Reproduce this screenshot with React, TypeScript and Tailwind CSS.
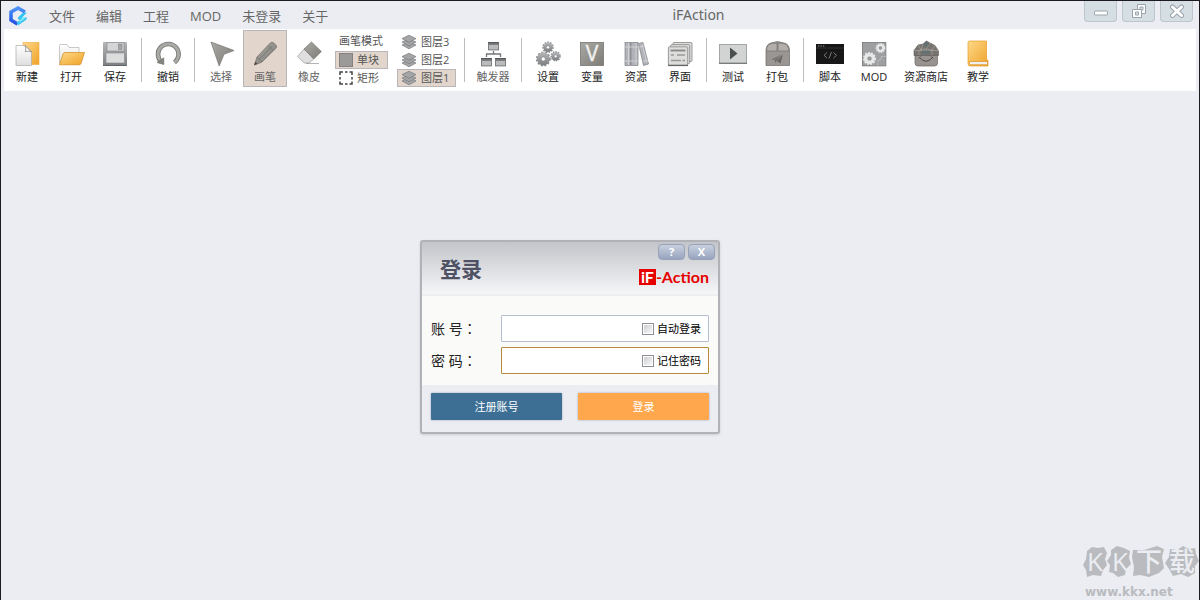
import type { ReactNode } from 'react';

const MENUS = ['文件', '编辑', '工程', 'MOD', '未登录', '关于'] as const;

function Icon({ children }: { children: ReactNode }) {
  return (
    <svg viewBox="0 0 28 28" className="h-7 w-7 shrink-0" aria-hidden="true">
      {children}
    </svg>
  );
}

// gradients shared by all toolbar icons
function Gradients() {
  return (
    <svg className="absolute h-0 w-0" aria-hidden="true">
      <defs>
        <linearGradient id="gold" x1="0" y1="0" x2="1" y2="1">
          <stop offset="0" stopColor="#fdd98a" />
          <stop offset="1" stopColor="#f0a227" />
        </linearGradient>
        <linearGradient id="paper" x1="0" y1="0" x2="0" y2="1">
          <stop offset="0" stopColor="#ffffff" />
          <stop offset="1" stopColor="#dedede" />
        </linearGradient>
        <linearGradient id="warm" x1="0" y1="0" x2="1" y2="1">
          <stop offset="0" stopColor="#aaa8a3" />
          <stop offset="1" stopColor="#7e7c76" />
        </linearGradient>
        <linearGradient id="steel" x1="0" y1="0" x2="0" y2="1">
          <stop offset="0" stopColor="#b4b6b8" />
          <stop offset="1" stopColor="#7c7e81" />
        </linearGradient>
        <linearGradient id="blue" x1="0" y1="0" x2="0" y2="1">
          <stop offset="0" stopColor="#4d94f8" />
          <stop offset="1" stopColor="#2450e0" />
        </linearGradient>
      </defs>
    </svg>
  );
}

function Gear({ x, y, r, fill = 'url(#steel)', hole = '#fff' }: { x: number; y: number; r: number; fill?: string; hole?: string }) {
  return (
    <g>
      <circle cx={x} cy={y} r={r - 0.9} fill="none" stroke={fill === 'url(#steel)' ? '#8b8d8f' : fill} strokeWidth="1.8" strokeDasharray={`${r * 0.27} ${r * 0.2}`} />
      <circle cx={x} cy={y} r={r - 1} fill={fill} />
      <circle cx={x} cy={y} r={r * 0.28} fill={hole} stroke="#77797b" strokeWidth=".5" />
    </g>
  );
}

const NewIcon = (
  <Icon>
    <path d="M10 2.5H26V24.5H10Z" fill="url(#gold)" stroke="#e9a83d" strokeWidth=".6" />
    <path d="M3 5.5H12L18.5 12V25.5H3Z" fill="url(#paper)" stroke="#aaa" strokeWidth=".7" />
    <path d="M12 5.5C13 8 13 10 12.2 11.6C14.5 11 17 11 18.5 12Z" fill="#fff" stroke="#777" strokeWidth=".7" />
  </Icon>
);
const OpenIcon = (
  <Icon>
    <path d="M2.5 23V5.5Q2.5 4.5 3.5 4.5H10L12 7.5H22V24Z" fill="url(#paper)" stroke="#b2b2b2" strokeWidth=".7" />
    <path d="M6 14Q6.4 12.5 8 12.5H27.5L24 23.5Q23.6 24.8 22 24.8H2.5Z" fill="url(#gold)" stroke="#d38a1d" strokeWidth=".7" />
  </Icon>
);
const SaveIcon = (
  <Icon>
    <rect x="2" y="2" width="24" height="24" rx="1" fill="url(#steel)" />
    <rect x="6" y="2.5" width="17" height="8.5" fill="#d5d6d7" stroke="#85878a" strokeWidth=".6" />
    <rect x="17.5" y="4" width="3.5" height="5.5" fill="#a4a6a8" stroke="#77797b" strokeWidth=".5" />
    <rect x="5" y="13" width="18.5" height="10" fill="#dcdddd" stroke="#85878a" strokeWidth=".6" />
    <path d="M2 25.5H26" stroke="#626568" />
  </Icon>
);
const UndoIcon = (
  <Icon>
    <path d="M7.5 22A10.3 10.3 0 1 1 20.5 22.5" fill="none" stroke="#777873" strokeWidth="4.6" />
    <path d="M7.5 22A10.3 10.3 0 1 1 20.5 22.5" fill="none" stroke="#a9aaa6" strokeWidth="2.8" />
    <path d="M3 22.5L9.8 17.8V24.5Z" fill="#858681" stroke="#686964" strokeWidth=".6" />
  </Icon>
);
const SelectIcon = (
  <Icon>
    <path d="M4 2L27 10.5L17 14.3L12.2 26Z" fill="url(#warm)" stroke="#77756f" strokeWidth=".7" />
  </Icon>
);
const PencilIcon = (
  <Icon>
    <path d="M3.5 25L6 17L19.5 2.8Q21 1.5 22.8 3L25 5.2Q26.3 6.8 25 8.2L11 22Z" fill="url(#warm)" stroke="#77726d" strokeWidth=".8" />
    <path d="M17 5.2L22.6 10.8M6 17L11 22M8.3 19L21 6.2" fill="none" stroke="#65615c" strokeWidth=".5" />
    <path d="M3.2 25.2L4.3 21.8L6.5 23.8Z" fill="#4c4945" />
  </Icon>
);
const EraserIcon = (
  <Icon>
    <path d="M11 23.5H24" stroke="#b5b5b5" />
    <path d="M9 9L18.8 19L14 23H9.5L2.5 16.5Z" fill="#dfdfdf" stroke="#9a9a98" strokeWidth=".7" />
    <path d="M16.5 2L26.3 11.5L18.8 19L9 9Z" fill="url(#warm)" stroke="#77756f" strokeWidth=".7" />
  </Icon>
);
const TriggerIcon = (
  <Icon>
    <path d="M14.5 11V14M7.5 17V14H21.5V17" fill="none" stroke="#73767a" strokeWidth="1.3" />
    {[[9, 2], [2, 18], [16, 18]].map(([x, y]) => (
      <g key={`${x}-${y}`}>
        <rect x={x} y={y} width="11" height="8.4" fill="#7b7d7f" />
        <rect x={x + 1} y={y + 3} width="9" height="4.4" fill="#b9bbbc" />
        <path d={`M${x} ${y + 0.6}H${x + 11}`} stroke="#55585b" strokeWidth="1.2" />
      </g>
    ))}
  </Icon>
);
const SettingsIcon = (
  <Icon>
    <Gear x={14} y={7.3} r={5.8} />
    <Gear x={9.3} y={19} r={7.4} />
    <Gear x={21.6} y={16.3} r={5.2} />
  </Icon>
);
const VariableIcon = (
  <Icon>
    <rect x="2.5" y="2.5" width="23" height="23" fill="url(#warm)" stroke="#77756f" strokeWidth=".8" />
    <text x="14" y="20.5" textAnchor="middle" fill="#f1f1ef" stroke="#f1f1ef" strokeWidth=".4" fontFamily="Open Sans" fontSize="21">V</text>
  </Icon>
);
const LibraryIcon = (
  <Icon>
    <g fill="#b2b3b8" stroke="#7e7f84" strokeWidth=".7">
      <rect x="3" y="2.5" width="5.5" height="23" />
      <rect x="9" y="2.5" width="7" height="23" />
      <path d="M16.5 3.5L21 2.5L26.5 24L21.5 25.5Z" />
    </g>
    <path d="M3 7H16M3 21H16M17.5 7L22.3 6M20.7 21.5L26 20.3" stroke="#dcdde0" strokeWidth=".8" />
    <path d="M6.5 3V25M14 3V25M20 4L25 23" stroke="#d0d1d6" />
  </Icon>
);
const WindowsIcon = (
  <Icon>
    <g fill="#dddddc" stroke="#858585" strokeWidth=".8">
      <rect x="7" y="2.5" width="19" height="19" rx="1" />
      <rect x="4.7" y="4.6" width="19" height="19" rx="1" />
      <rect x="2.4" y="6.8" width="19.3" height="18.7" rx="1" />
    </g>
    <path d="M4.5 10.5H19.5" stroke="#888" strokeWidth="1.8" />
    <path d="M5 15H8M11 15H19M5 20.5H15M16.5 20.5H19" stroke="#999" strokeWidth="1.4" />
    <path d="M2 25.4H22" stroke="#666" strokeWidth="1.4" />
  </Icon>
);
const PlayIcon = (
  <Icon>
    <rect x=".5" y="4.5" width="27" height="19" fill="#d2d4d4" stroke="#a3a6a6" />
    <path d="M0 23.3H28" stroke="#777a7a" strokeWidth="1.3" />
    <path d="M11 7.5L18.5 13.5L11 19.5Z" fill="#4b514f" />
  </Icon>
);
const PackageIcon = (
  <Icon>
    <path d="M3 10Q3.5 4 8 3L14.5 1.5L21 3Q26 4 26.5 10V25.5H3Z" fill="#9a9693" stroke="#6d6966" strokeWidth=".7" />
    <path d="M3.5 10Q4 4.5 8 3.5L14 3V11H3.5ZM15 3L21 3.5Q25.5 5 26 11H15Z" fill="#b2aeab" stroke="#6d6966" strokeWidth=".6" />
    <path d="M8 20L20 13.5L17.5 23.5L13.8 20.8L12 23V19.5Z" fill="#696562" />
    <path d="M12 19.5L20 13.5L13.8 20.8" fill="none" stroke="#aaa6a3" strokeWidth=".6" />
  </Icon>
);
const ScriptIcon = (
  <Icon>
    <rect x="0" y="4" width="28" height="20" fill="#171717" />
    <path d="M0 8H28" stroke="#3b3b3b" strokeWidth=".8" />
    <path d="M2 6H3.3M4.5 6H5.8M7 6H8.3" stroke="#999" />
    <path d="M11 12.5L8 15.3L11 18M17.5 12.5L20.5 15.3L17.5 18M15.5 12L13 18.5" fill="none" stroke="#777" strokeWidth="1" />
  </Icon>
);
const ModIcon = (
  <Icon>
    <rect x="2.4" y="2.4" width="23.5" height="23.5" fill="#9d9fa0" stroke="#77797a" strokeWidth=".8" />
    <Gear x={9.5} y={18.5} r={6.6} fill="#e7e8e8" hole="#9d9fa0" />
    <Gear x={20.5} y={8} r={5} fill="#e7e8e8" hole="#9d9fa0" />
    <path d="M18 25.5V20H21V16.5H25.5" fill="none" stroke="#c8c9ca" strokeWidth=".8" strokeDasharray="2 1" />
  </Icon>
);
const StoreIcon = (
  <Icon>
    <path d="M3 14H25.5V23Q25.5 26 22.5 26H6Q3 26 3 23Z" fill="#989390" stroke="#6c6764" strokeWidth=".7" />
    <path d="M2 10.5L6 5L11 4L14.5 1L18 3L23 5.5L26.5 11V15.5H2Z" fill="#77736f" stroke="#5f5b58" strokeWidth=".6" />
    <path d="M6 5L9 10M11 4L9 10L14 9L18 3M14 9L20 10L23 5.5M2 10.5H26M7 10V15M13 10V15M20 10V15" fill="none" stroke="#b0aca8" strokeWidth=".6" />
    <path d="M10 10.5H17.5V14.5H10Z" fill="#637173" />
    <path d="M11 4L14.5 1L17.5 4L14 8Z" fill="#657071" />
    <path d="M7.5 17.5Q14 25 20.5 17.5M6.8 18.3L8.5 16.5M19.5 16.5L21.2 18.3" fill="none" stroke="#4d4946" strokeWidth="1" />
  </Icon>
);
const BookIcon = (
  <Icon>
    <path d="M4 2.5Q4 1 5.5 1H22.5V20H24V26H6Q4 26 4 23.5Z" fill="url(#gold)" stroke="#e79b25" strokeWidth=".7" />
    <path d="M23.5 21.5H7Q5.4 21.7 5.4 23.2Q5.4 24.7 7 24.7H23.5Z" fill="#fff" stroke="#d58b20" strokeWidth=".7" />
    <path d="M7 23H23" stroke="#d8d8d8" strokeWidth=".8" />
  </Icon>
);

function LayerIcon() {
  return (
    <svg viewBox="0 0 16 16" className="h-4 w-4 shrink-0" aria-hidden="true">
      <g fill="#a3a5a6" stroke="#777a7c" strokeWidth=".7">
        <path d="M1 11L8 7.8L15 11L8 14.8Z" />
        <path d="M1 8L8 4.8L15 8L8 11.8Z" />
        <path d="M1 4.6L8 1.2L15 4.6L8 8.4Z" />
      </g>
    </svg>
  );
}

type ToolProps = { icon: ReactNode; label: string; active?: boolean; dim?: boolean; width?: string };

function Tool({ icon, label, active, dim, width = 'w-11' }: ToolProps) {
  return (
    <button
      type="button"
      aria-pressed={active}
      className={`flex h-[57px] shrink-0 flex-col items-center gap-px border pt-[9px] text-[11px] leading-4 whitespace-nowrap ${width} ${
        active ? 'border-[#b9b6b9] bg-[#e1d5cc]' : 'border-transparent'
      } ${active || dim ? 'text-[#666]' : 'text-[#222]'}`}
    >
      {icon}
      {label}
    </button>
  );
}

function Separator() {
  return (
    <div className="flex h-[57px] w-[9px] shrink-0 justify-center pt-2">
      <div className="h-11 w-px bg-[#bdbdbd]" />
    </div>
  );
}

function Option({ icon, label, active }: { icon: ReactNode; label: string; active?: boolean }) {
  return (
    <button
      type="button"
      aria-pressed={active}
      className={`flex h-[18px] items-center gap-1 border pl-[3px] text-[11px] leading-4 text-[#555] ${
        active ? 'border-[#b9b6b9] bg-[#e1d5cc]' : 'border-transparent'
      }`}
    >
      {icon}
      {label}
    </button>
  );
}

function Toolbar() {
  return (
    <div className="mx-[3px] flex h-[62px] items-start bg-white pt-px pl-px" role="toolbar" aria-label="工具栏">
      <Tool icon={NewIcon} label="新建" />
      <Tool icon={OpenIcon} label="打开" />
      <Tool icon={SaveIcon} label="保存" />
      <Separator />
      <Tool icon={UndoIcon} label="撤销" />
      <Separator />
      <Tool icon={SelectIcon} label="选择" dim />
      <Tool icon={PencilIcon} label="画笔" active />
      <Tool icon={EraserIcon} label="橡皮" dim />
      <div className="ml-1 flex w-[53px] shrink-0 flex-col pt-[3px]">
        <span className="h-[18px] pl-1 text-[11px] leading-4 text-[#555]">画笔模式</span>
        <Option
          active
          label="单块"
          icon={
            <svg viewBox="0 0 14 14" className="h-3.5 w-3.5 shrink-0" aria-hidden="true">
              <rect x=".5" y=".5" width="13" height="13" fill="#9b9a99" stroke="#858382" />
            </svg>
          }
        />
        <Option
          label="矩形"
          icon={
            <svg viewBox="0 0 14 14" className="h-3.5 w-3.5 shrink-0" aria-hidden="true">
              <path
                d="M1 4V1H4M6 1H8.500M10.500 1H13V4M13 6V8.500M13 10.500V13H10.500M8.500 13H6M4 13H1V10.500M1 8.500V6"
                fill="none"
                stroke="#444"
                strokeWidth="1.500"
              />
            </svg>
          }
        />
      </div>
      <div className="mr-1 ml-[9px] flex w-[59px] shrink-0 flex-col pt-[3px]">
        <Option icon={<LayerIcon />} label="图层3" />
        <Option icon={<LayerIcon />} label="图层2" />
        <Option icon={<LayerIcon />} label="图层1" active />
      </div>
      <Separator />
      <Tool icon={TriggerIcon} label="触发器" dim width="w-12" />
      <Separator />
      <Tool icon={SettingsIcon} label="设置" />
      <Tool icon={VariableIcon} label="变量" />
      <Tool icon={LibraryIcon} label="资源" />
      <Tool icon={WindowsIcon} label="界面" />
      <Separator />
      <Tool icon={PlayIcon} label="测试" />
      <Tool icon={PackageIcon} label="打包" />
      <Separator />
      <Tool icon={ScriptIcon} label="脚本" />
      <Tool icon={ModIcon} label="MOD" />
      <Tool icon={StoreIcon} label="资源商店" width="w-[60px]" />
      <Tool icon={BookIcon} label="教学" />
    </div>
  );
}

function WindowButton({ label, children }: { label: string; children: ReactNode }) {
  return (
    <button
      type="button"
      aria-label={label}
      className="flex h-[21px] w-[33px] items-center justify-center rounded-b-sm border border-t-0 border-[#bcc6cc] bg-[#d5dee3]"
    >
      <svg viewBox="0 0 16 16" className="h-4 w-4" aria-hidden="true">
        {children}
      </svg>
    </button>
  );
}

function TitleBar() {
  return (
    <header className="grid h-7 grid-cols-[1fr_auto_1fr] items-start">
      <div className="flex items-center pl-[7px]">
        <svg viewBox="0 0 20 22" className="mt-[3px] h-[22px] w-5" aria-hidden="true">
          <path d="M17 7L10 3L3 7V15L9.500 19" fill="none" stroke="url(#blue)" strokeWidth="3.600" />
          <path d="M19 7.500L14.500 12H18.500V14.500L10 20.500L8.500 17L12 15.500L9.500 13L14.500 8Z" fill="#35c3f3" />
          <path d="M14.500 12H18.500L11 18L12 15.500Z" fill="#86ecf8" />
        </svg>
        <nav className="ml-[21px] flex gap-[21px] pt-[3px]" aria-label="主菜单">
          {MENUS.map(menu => (
            <button key={menu} type="button" className="text-[13px] leading-6 whitespace-nowrap text-[#666]">
              {menu}
            </button>
          ))}
        </nav>
      </div>
      <h1 className="ml-[197px] font-['Noto_Sans','Noto_Sans_CJK_SC',sans-serif] text-sm leading-7 text-[#666]">iFAction</h1>
      <div className="flex justify-end gap-[5px] pr-[6px]">
        <WindowButton label="最小化">
          <rect x="1.500" y="8" width="13" height="4" rx="1" fill="#fff" stroke="#9aa4aa" />
        </WindowButton>
        <WindowButton label="还原">
          <path d="M6.500 1.500H14.500V10.500H6.500Z" fill="#fff" stroke="#9aa4aa" />
          <path d="M9 4H12V7H9Z" fill="#d5dee3" stroke="#9aa4aa" />
          <path d="M1.500 6.500H10.500V14.500H1.500Z" fill="#fff" stroke="#9aa4aa" />
          <path d="M4.500 9H7.500V12H4.500Z" fill="#d5dee3" stroke="#9aa4aa" />
        </WindowButton>
        <WindowButton label="关闭">
          <path d="M3.500 4L12.500 12.500M12.500 4L3.500 12.500" stroke="#9aa4aa" strokeWidth="5" strokeLinecap="round" />
          <path d="M3.500 4L12.500 12.500M12.500 4L3.500 12.500" stroke="#fff" strokeWidth="3" strokeLinecap="round" />
        </WindowButton>
      </div>
    </header>
  );
}

function CaptionButton({ label, glyph }: { label: string; glyph: string }) {
  return (
    <button
      type="button"
      aria-label={label}
      className="flex h-4 w-[27px] items-center justify-center rounded-sm border border-[#98a3ba] bg-gradient-to-b from-[#c9d1df] to-[#98a4bf] font-['Open_Sans',sans-serif] text-[11px] leading-3 font-bold text-white"
    >
      {glyph}
    </button>
  );
}

type FieldProps = { id: string; label: string; type: string; option: string; focused?: boolean };

function Field({ id, label, type, option, focused }: FieldProps) {
  return (
    <div className="flex items-center">
      <label htmlFor={id} className="w-[70px] text-sm leading-5 whitespace-nowrap text-[#222]">
        {label}
        <span className="font-['Noto_Sans_CJK_TC',sans-serif]">：</span>
      </label>
      <div
        className={`flex h-[27px] min-w-0 flex-1 items-center rounded-[1px] border bg-white pr-[7px] ${
          focused ? 'border-[#b98a3c]' : 'border-[#b7bdd0]'
        }`}
      >
        <input id={id} type={type} className="h-full min-w-0 flex-1 px-2 text-sm outline-none" />
        <label className="flex items-center gap-[3px] text-[11px] leading-4 whitespace-nowrap text-black">
          <input
            type="checkbox"
            className="h-3 w-3 appearance-none border border-[#8f9092] bg-gradient-to-br from-[#c6c9ce] to-white ring-1 ring-white ring-inset"
          />
          {option}
        </label>
      </div>
    </div>
  );
}

function LoginDialog() {
  return (
    <form
      role="dialog"
      aria-labelledby="login-title"
      className="w-[300px] rounded-[3px] border-2 border-[#b0b2b7] bg-[#ebedf2] shadow-sm"
      onSubmit={e => e.preventDefault()}
    >
      <div className="flex h-[54px] justify-between border-b-2 border-[#eeeeef] bg-gradient-to-b from-[#c3c5ca] to-[#f5f6f8] pl-[18px]">
        <h2 id="login-title" className="pt-[11px] text-[21px] leading-8 font-bold text-[#4e5264]">
          登录
        </h2>
        <div className="flex flex-col items-end pt-[2px]">
          <div className="flex gap-[3px] pr-[3px]">
            <CaptionButton label="帮助" glyph="?" />
            <CaptionButton label="关闭" glyph="X" />
          </div>
          <div className="flex items-center pt-2 pr-[9px] font-['Lato',sans-serif] text-base leading-[18px] font-bold text-[#e60000]">
            <span className="bg-[#e60000] px-0.5 leading-4 text-white">iF</span>-Action
          </div>
        </div>
      </div>
      <div className="flex flex-col gap-[5px] bg-[#fafaf9] px-[9px] pt-[19px] pb-[11px]">
        <Field id="account" label="账 号" type="text" option="自动登录" />
        <Field id="password" label="密 码" type="password" option="记住密码" focused />
      </div>
      <div className="grid grid-cols-2 gap-4 px-[9px] pt-2 pb-3 text-[11px] leading-4 text-white">
        <button type="button" className="h-[27px] rounded-[1px] bg-[#3d6f95] shadow-[0_0_2px_#8a9ab0]">
          注册账号
        </button>
        <button type="submit" className="h-[27px] rounded-[1px] bg-[#ffa74c] shadow-[0_0_2px_#8a9ab0]">
          登录
        </button>
      </div>
    </form>
  );
}

function Watermark() {
  return (
    <a href="#" className="mt-auto flex w-[116px] flex-col self-end text-[#b9bbbf]">
      <span className="relative grid h-[34px] grid-cols-[24px_26px_32px_34px] text-center text-[26px] leading-8 font-medium text-[#ebedf2]">
        <svg viewBox="0 0 116 34" className="absolute inset-0 h-full w-full" aria-hidden="true">
          <g fill="#b9bbbf">
            <path d="M4 6L9 2L15 3L21 2L24 8L22 14L24 20L20 25L18 31L10 30L4 32L3 25L0 20L3 14Z" />
            <path d="M28 5L34 1L41 3L47 6L46 13L48 19L43 24L42 30L35 32L30 28L26 27L27 20L24 16L28 10Z" />
            <path d="M50 5L61 5L74 1L81 4L79 12L81 23L76 28L66 32L57 30L50 31L51 22L49 12Z" />
            <path d="M87 4L94 5L100 1L106 4L112 3L113 9L116 16L112 21L112 28L105 32L98 29L90 31L86 24L82 18L86 12Z" />
          </g>
        </svg>
        <span className="relative">K</span>
        <span className="relative">K</span>
        <span className="relative">下</span>
        <span className="relative">载</span>
      </span>
      <span className="pt-[5px] pl-0.5 font-['DejaVu_Sans',sans-serif] text-xs leading-4 font-bold">www.kkx.net</span>
    </a>
  );
}

export default function App() {
  return (
    <div className="flex min-h-screen flex-col overflow-hidden border-x border-t border-[#1c1c20] bg-[#ebedf2] font-['Open_Sans','Noto_Sans_CJK_SC',sans-serif]">
      <Gradients />
      <TitleBar />
      <Toolbar />
      <main className="flex flex-1 flex-col items-center pt-[149px]">
        <div className="pr-[60px]">
          <LoginDialog />
        </div>
        <Watermark />
      </main>
    </div>
  );
}
